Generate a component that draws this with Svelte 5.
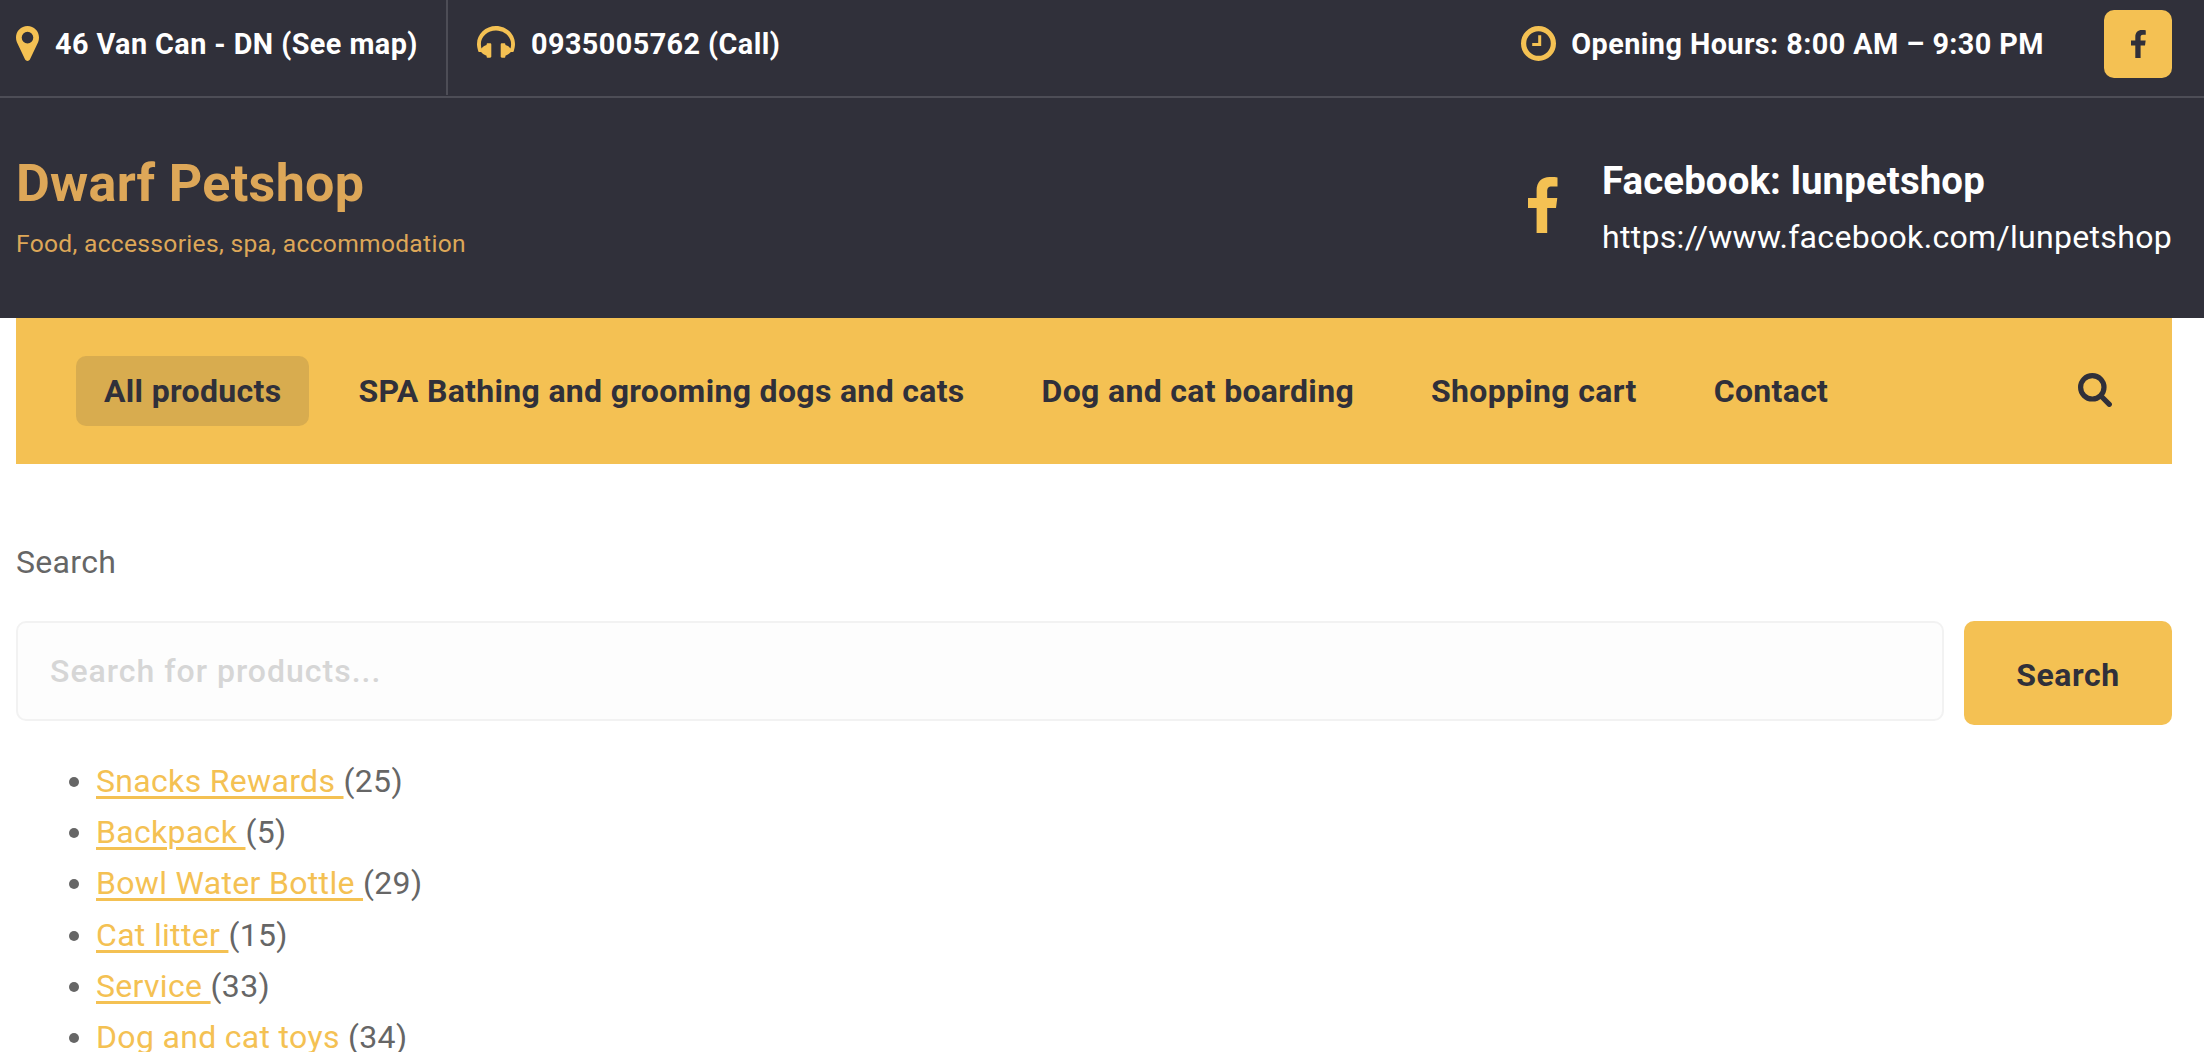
<script>
  const nav = [
    'All products',
    'SPA Bathing and grooming dogs and cats',
    'Dog and cat boarding',
    'Shopping cart',
    'Contact'
  ];
  const categories = [
    { name: 'Snacks Rewards', count: 25 },
    { name: 'Backpack', count: 5 },
    { name: 'Bowl Water Bottle', count: 29 },
    { name: 'Cat litter', count: 15 },
    { name: 'Service', count: 33 },
    { name: 'Dog and cat toys', count: 34 }
  ];
</script>

{#snippet facebook(cls)}
  <svg class={cls} viewBox="0 0 30 56" aria-hidden="true">
    <path d="M29.5.4V9.500H24c-4 0-4.800 2-4.800 4.900V21H29.300L28 31H19.200V56H8.600V31H0V21H8.600V13.500C8.600 5 13.800 0 21.600 0c3.700 0 6.800.2 7.900.4z" />
  </svg>
{/snippet}

<div class="page">
  <header>
    <div class="topbar">
      <div class="info address">
        <svg class="pin" viewBox="0 0 23 35" aria-hidden="true">
          <path fill-rule="evenodd" d="M11.500 0C18 0 23 5.200 23 11.600c0 1.700-.3 3.300-.9 4.600L13.900 33.500c-.9 1.900-3.900 1.900-4.800 0L.9 16.200C.3 14.900 0 13.300 0 11.600 0 5.200 5 0 11.500 0zm0 5.800a5.800 5.800 0 1 0 0 11.600 5.800 5.800 0 0 0 0-11.600z" />
        </svg>
        <span>46 Van Can - DN (See map)</span>
      </div>
      <div class="info phone">
        <svg class="headphones" viewBox="0 0 38 32" aria-hidden="true">
          <path d="M19 0C29.500 0 38 8 38 18c0 2.600-.5 4.600-1.300 7.200-.3.700-.8.900-1.500.9h-1.300c-1.400 1.700-3.300 3-5.500 3.700v.7c0 .8-.5 1.300-1.200 1.300h-2.300c-.7 0-1.200-.5-1.200-1.200V18.500c0-.7.500-1.200 1.200-1.200h2.300c.7 0 1.200.5 1.200 1.200v.6c2 .5 3.800 1.700 5.100 3.300.4-1.400.6-2.700.6-4.400C34.100 10.700 27.300 4.600 19 4.600S3.900 10.700 3.900 18c0 1.700.2 3 .6 4.400 1.300-1.600 3.100-2.800 5.100-3.300v-.6c0-.7.500-1.200 1.200-1.200h2.300c.7 0 1.200.5 1.200 1.200v12.100c0 .7-.5 1.200-1.200 1.200h-2.300c-.7 0-1.200-.5-1.200-1.300v-.7c-2.200-.7-4.100-2-5.500-3.700H2.800c-.7 0-1.200-.2-1.500-.9C.5 22.600 0 20.600 0 18 0 8 8.500 0 19 0z" />
        </svg>
        <span>0935005762 (Call)</span>
      </div>
      <div class="info hours">
        <svg class="clock" viewBox="0 0 35 35" aria-hidden="true">
          <circle cx="17.500" cy="17.500" r="14.900" />
          <path d="M18.700 9.200V18.600H11.200" />
        </svg>
        <span>Opening Hours: 8:00 AM – 9:30 PM</span>
      </div>
      <a class="social" href="#facebook" aria-label="Facebook">{@render facebook('fb-small')}</a>
    </div>

    <div class="brandbar">
      <div class="brand">
        <div class="title">Dwarf Petshop</div>
        <div class="tagline">Food, accessories, spa, accommodation</div>
      </div>
      <div class="contact">
        {@render facebook('fb-large')}
        <div>
          <div class="contact-title">Facebook: lunpetshop</div>
          <div class="contact-link">https://www.facebook.com/lunpetshop</div>
        </div>
      </div>
    </div>
  </header>

  <nav>
    {#each nav as item, i}
      <a href="#nav" class:active={i === 0}>{item}</a>
    {/each}
    <svg class="magnifier" viewBox="0 0 34 34" aria-hidden="true">
      <circle cx="14.300" cy="14.300" r="11.700" />
      <path d="M23 23L31.300 31.300" />
    </svg>
  </nav>

  <main>
    <label for="q">Search</label>
    <div class="form">
      <input id="q" type="search" placeholder="Search for products..." />
      <button>Search</button>
    </div>
    <ul>
      {#each categories as c}
        <li><a href="#category">{c.name + ' '}</a>({c.count})</li>
      {/each}
    </ul>
  </main>
</div>

<style>
  :global(body) { margin: 0; background: #fff; overflow: hidden; }
  .page {
    height: 1052px;
    overflow: hidden;
    font-family: Roboto, sans-serif;
    font-size: 32px;
    line-height: 51.2px;
    letter-spacing: 0.32px;
    color: #666;
  }
  header { background: #30303a; color: #fff; }
  .topbar {
    display: flex;
    height: 96px;
    padding: 0 32px 0 16px;
    border-bottom: 2px solid #4d4d56;
    font-size: 28.8px;
    font-weight: 700;
    letter-spacing: 0.43px;
    white-space: nowrap;
  }
  .info { display: flex; align-items: flex-start; height: 88px; line-height: 88px; }
  .info svg { flex: none; margin-top: 26px; fill: #f4c153; }
  .address { width: 430px; height: 95px; border-right: 2px solid #4d4d56; }
  .pin { width: 23px; height: 35px; margin-right: 16px; }
  .phone { padding-left: 29px; }
  .headphones { width: 38px; height: 32px; margin-right: 16px; }
  .hours { margin-left: auto; }
  .hours .clock { width: 35px; height: 35px; margin-right: 15px; fill: none; stroke: #f4c153; stroke-width: 5.200; }
  .clock path { stroke-width: 3; }
  .social {
    display: flex;
    align-items: center;
    justify-content: center;
    width: 68px;
    height: 68px;
    margin: 10px 0 0 60px;
    border-radius: 10px;
    background: #f4c153;
  }
  .fb-small { width: 15px; height: 28px; fill: #30303a; }
  .brandbar {
    display: flex;
    justify-content: space-between;
    height: 220px;
    padding: 0 32px 0 16px;
  }
  .brand { padding-top: 54px; color: #dda758; }
  .title { font-size: 52px; font-weight: 700; line-height: 64px; letter-spacing: 0.32px; }
  .tagline { margin-top: 8px; font-size: 24.6px; line-height: 39px; letter-spacing: 0.3px; }
  .contact { display: flex; align-items: flex-start; padding-top: 54px; }
  .fb-large { width: 30px; height: 56px; margin: 25px 44px 0 0; fill: #f4c153; }
  .contact-title { font-size: 38.4px; font-weight: 700; line-height: 58px; letter-spacing: 0.12px; }
  .contact-link { padding-top: 1px; line-height: 52px; }
  nav {
    display: flex;
    align-items: center;
    gap: 21px;
    height: 146px;
    margin: 0 32px 0 16px;
    padding: 0 60px;
    box-sizing: border-box;
    background: #f4c153;
    font-weight: 700;
  }
  nav a {
    padding: 0 28px;
    border-radius: 10px;
    line-height: 70px;
    color: #30303a;
    text-decoration: none;
    white-space: nowrap;
  }
  nav .active { background: #d8ac4f; }
  .magnifier { width: 34px; height: 34px; margin: -2px 0 0 auto; fill: none; stroke: #30303a; stroke-width: 5.200; stroke-linecap: round; }
  main { padding: 73px 32px 0 16px; }
  label { display: block; height: 84px; }
  .form { display: flex; align-items: flex-start; gap: 20px; }
  input {
    flex: 1;
    height: 100px;
    box-sizing: border-box;
    padding: 0 32px;
    border: 2px solid #f2f2f2;
    border-radius: 10px;
    background: #fdfdfd;
    font: 500 32px Roboto, sans-serif;
    letter-spacing: 1px;
    appearance: none;
  }
  input::placeholder { color: #d6d6d6; opacity: 1; }
  button {
    width: 208px;
    height: 104px;
    padding: 4px 0 0;
    border: 0;
    border-radius: 10px;
    background: #f4c153;
    color: #30303a;
    font: 700 32px Roboto, sans-serif;
    letter-spacing: 0.6px;
  }
  ul { margin: 31px 0 0; padding-left: 80px; }
  li a {
    color: #f4c153;
    text-decoration: underline;
    text-decoration-thickness: 3px;
    text-underline-offset: 4px;
    white-space: pre-wrap;
  }
</style>
